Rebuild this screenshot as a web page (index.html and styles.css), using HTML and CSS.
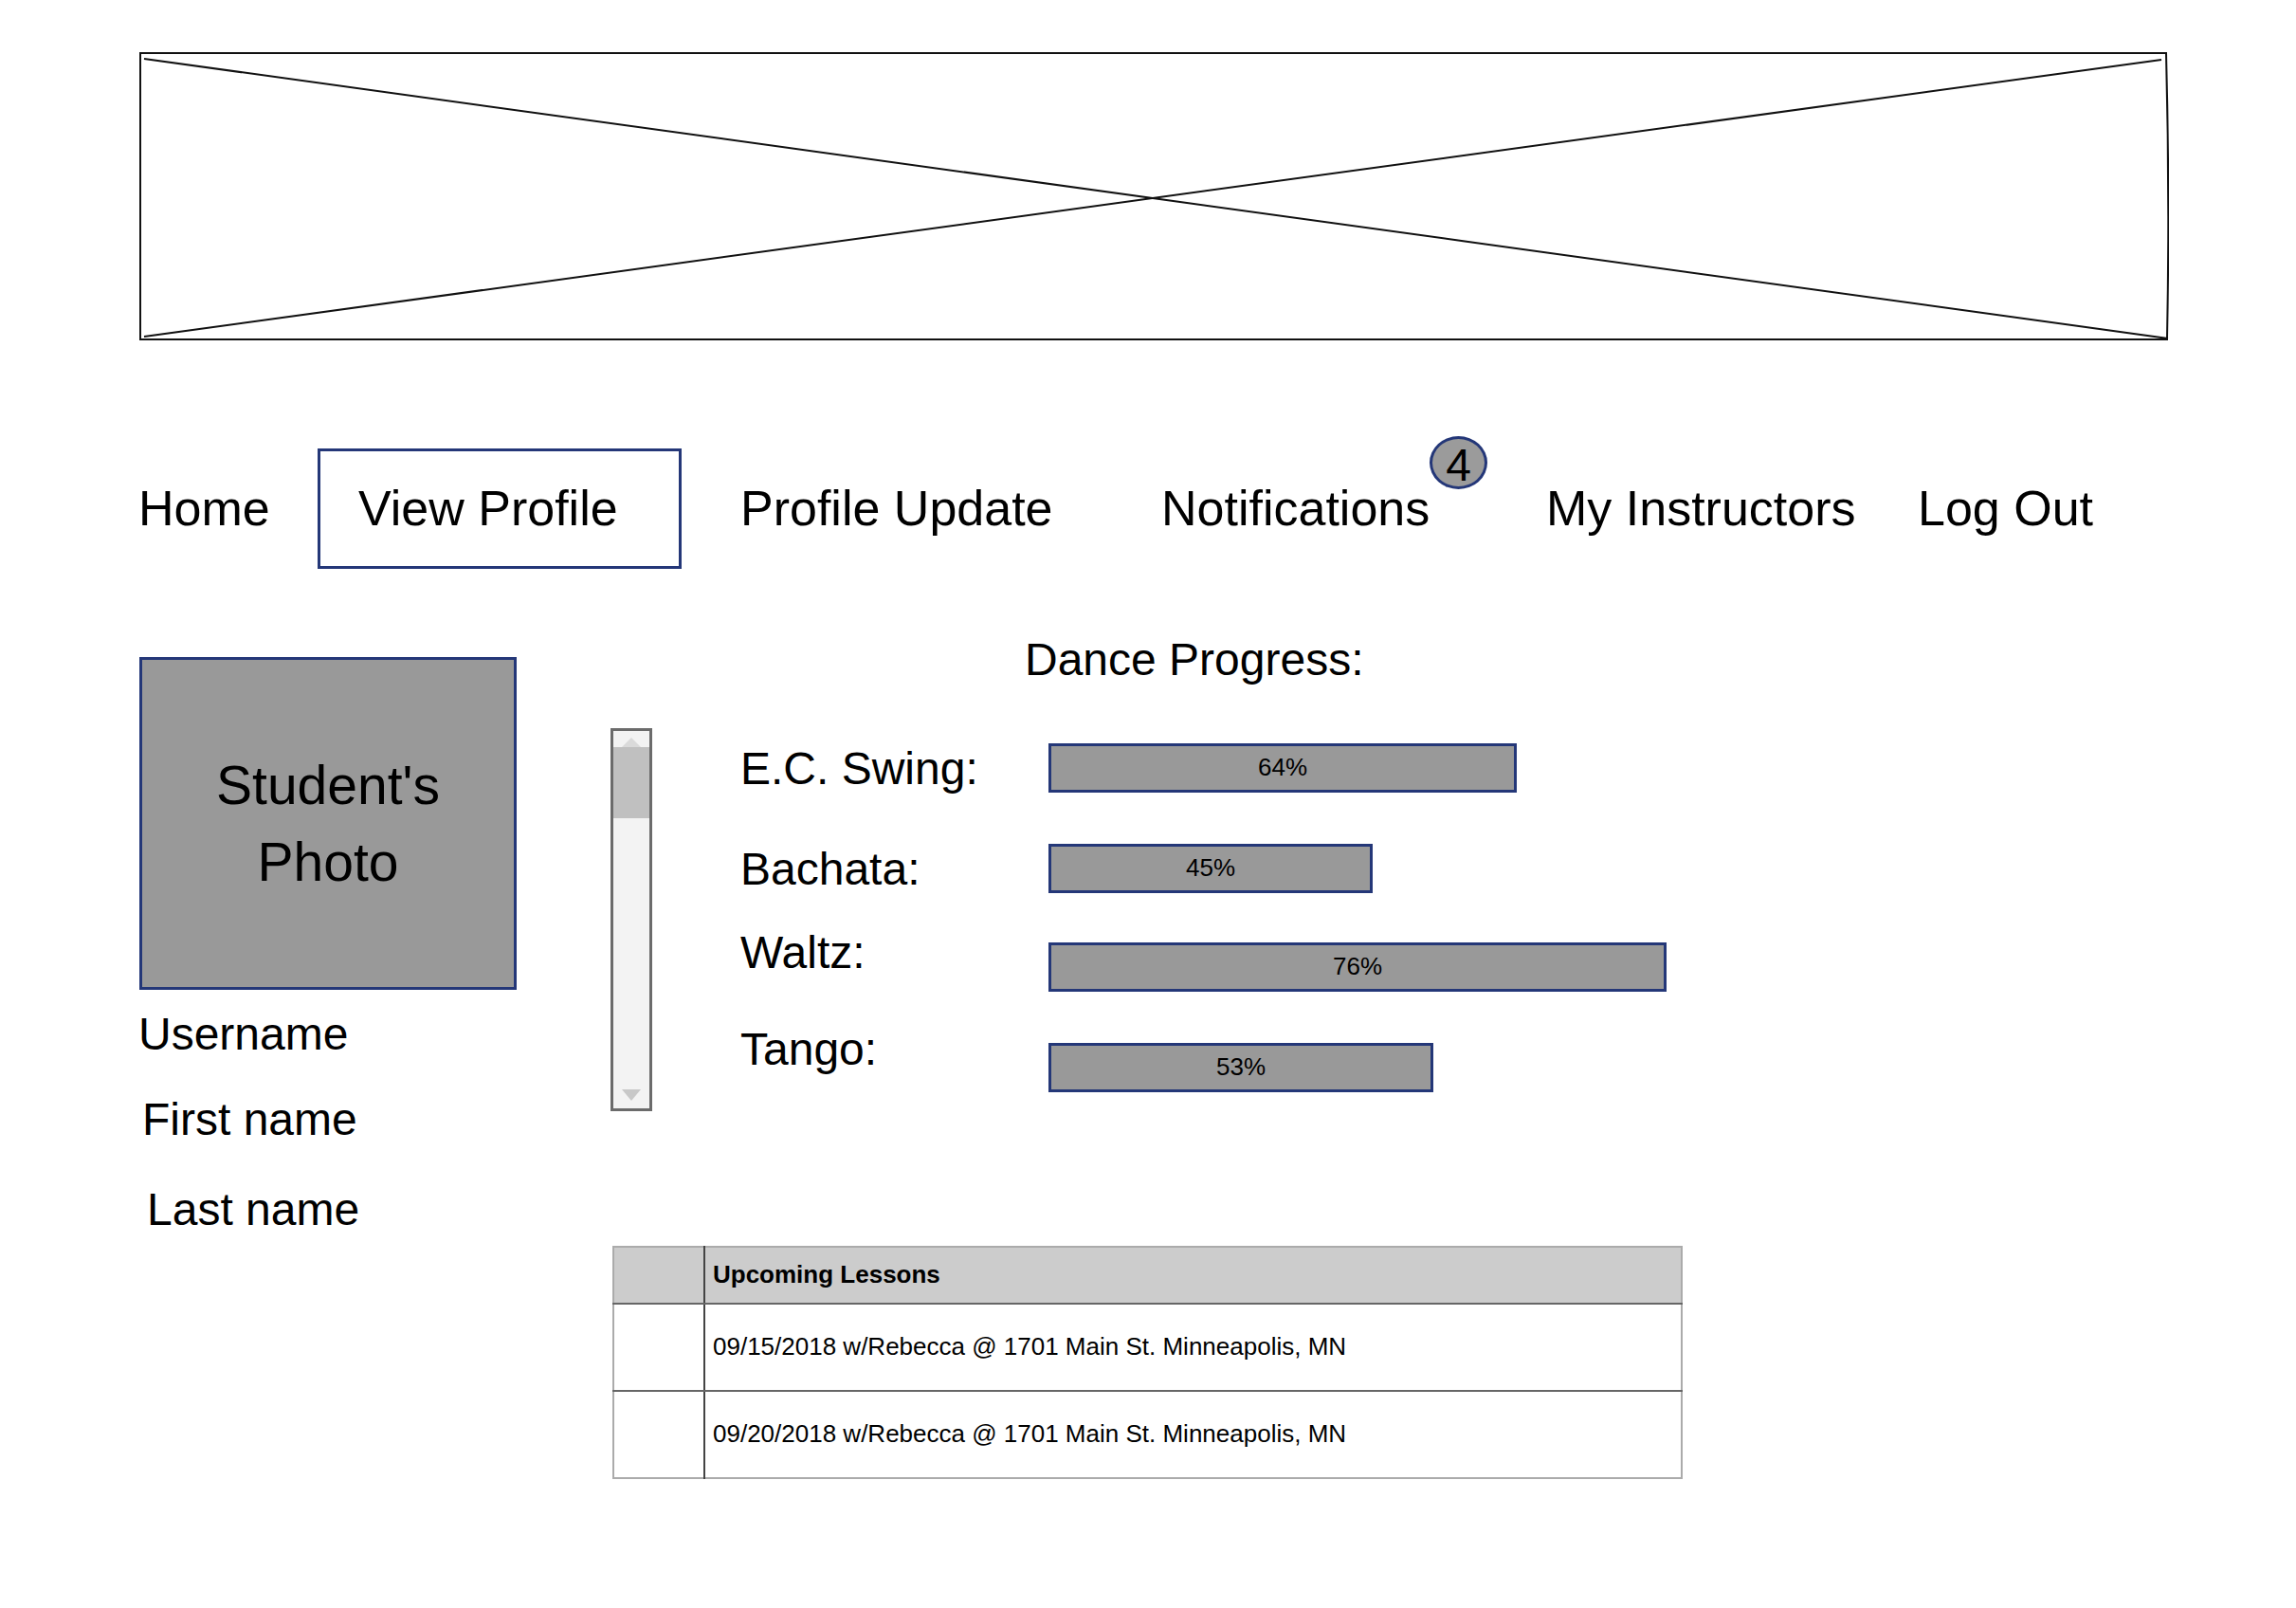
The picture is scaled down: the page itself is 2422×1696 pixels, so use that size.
FILE: index.html
```html
<!DOCTYPE html>
<html lang="en">
<head>
<meta charset="utf-8">
<title>Student Profile</title>
<link rel="stylesheet" href="styles.css">
</head>
<body>
<div class="page">
  <header class="banner">
    <svg width="2141" height="304" viewBox="0 0 2141 304" xmlns="http://www.w3.org/2000/svg">
      <path d="M1 1 H2138 Q2142 152 2139 303 H1 Z" fill="none" stroke="#111" stroke-width="2"/>
      <line x1="5" y1="7" x2="2140" y2="302" stroke="#111" stroke-width="2"/>
      <line x1="2133" y1="8" x2="5" y2="300" stroke="#111" stroke-width="2"/>
    </svg>
  </header>

  <nav class="nav">
    <a class="nav-item" href="#">Home</a>
    <a class="nav-item nav-item--active" href="#">View Profile</a>
    <a class="nav-item" href="#">Profile Update</a>
    <a class="nav-item nav-item--notif" href="#">Notifications<span class="badge">4</span></a>
    <a class="nav-item" href="#">My Instructors</a>
    <a class="nav-item" href="#">Log Out</a>
  </nav>

  <main class="main">
    <aside class="profile">
      <div class="photo">Student's<br>Photo</div>
      <div class="field field--user">Username</div>
      <div class="field field--first">First name</div>
      <div class="field field--last">Last name</div>
    </aside>

    <section class="content">
      <h2 class="progress-title">Dance Progress:</h2>
      <div class="progress">
        <div class="scrollbar">
          <span class="sb-up"></span>
          <span class="sb-thumb"></span>
          <span class="sb-down"></span>
        </div>
        <div class="labels">
          <div class="label">E.C. Swing:</div>
          <div class="label">Bachata:</div>
          <div class="label">Waltz:</div>
          <div class="label">Tango:</div>
        </div>
        <div class="bars">
          <div class="bar" style="width:494px">64%</div>
          <div class="bar" style="width:342px">45%</div>
          <div class="bar" style="width:652px">76%</div>
          <div class="bar" style="width:406px">53%</div>
        </div>
      </div>

      <table class="lessons">
        <thead>
          <tr><th class="c-blank"></th><th>Upcoming Lessons</th></tr>
        </thead>
        <tbody>
          <tr><td class="c-blank"></td><td>09/15/2018 w/Rebecca @ 1701 Main St. Minneapolis, MN</td></tr>
          <tr><td class="c-blank"></td><td>09/20/2018 w/Rebecca @ 1701 Main St. Minneapolis, MN</td></tr>
        </tbody>
      </table>
    </section>
  </main>
</div>
</body>
</html>
```

FILE: styles.css
```css
html, body {
  margin: 0;
  padding: 0;
  background: #fff;
}

body {
  font-family: "Liberation Sans", Arial, Helvetica, sans-serif;
  color: #000;
}

.page {
  padding-left: 142px;
  width: 2280px;
}

/* banner placeholder */
.banner {
  margin-top: 55px;
  margin-left: 5px;
  width: 2141px;
  height: 304px;
}

.banner svg {
  display: block;
}

/* navigation */
.nav {
  display: grid;
  grid-template-columns: 189px 446px 444px 406px 392px auto;
  align-items: center;
  height: 127px;
  margin-top: 114px;
  margin-left: 4px;
  font-size: 52px;
  line-height: 1.15;
}

.nav-item {
  color: #000;
  text-decoration: none;
  white-space: nowrap;
}

.nav-item--active {
  display: flex;
  align-items: center;
  box-sizing: border-box;
  width: 384px;
  height: 127px;
  padding-left: 40px;
  border: 3px solid #243778;
}

.nav-item--notif {
  position: relative;
}

.badge {
  position: absolute;
  left: 283px;
  top: -47px;
  width: 61px;
  height: 56px;
  box-sizing: border-box;
  border: 3px solid #243778;
  border-radius: 50%;
  background: #9b9b9b;
  font-size: 48px;
  line-height: 56px;
  text-align: center;
}

/* main area */
.main {
  display: flex;
  margin-top: 68px;
}

.profile {
  flex: none;
  width: 502px;
  padding-top: 25px;
}

.photo {
  margin-left: 5px;
  width: 398px;
  height: 351px;
  box-sizing: border-box;
  border: 3px solid #243778;
  background: #999;
  display: flex;
  align-items: center;
  justify-content: center;
  text-align: center;
  font-size: 57px;
  line-height: 81px;
}

.field {
  font-size: 48px;
  line-height: 1.15;
}

.field--user {
  margin-top: 19px;
  margin-left: 4px;
}

.field--first {
  margin-top: 35px;
  margin-left: 8px;
}

.field--last {
  margin-top: 40px;
  margin-left: 13px;
}

.content {
  flex: none;
}

.progress-title {
  margin: 0;
  padding-left: 437px;
  font-size: 48px;
  font-weight: normal;
  line-height: 1.15;
}

.progress {
  display: flex;
  margin-top: 45px;
}

/* scrollbar */
.scrollbar {
  flex: none;
  width: 44px;
  height: 404px;
  box-sizing: border-box;
  border: 3px solid #6b6b6b;
  background: #f3f3f3;
  display: flex;
  flex-direction: column;
  align-items: center;
}

.sb-up {
  width: 0;
  height: 0;
  margin-top: 7px;
  border-left: 10px solid transparent;
  border-right: 10px solid transparent;
  border-bottom: 10px solid #dadada;
}

.sb-thumb {
  align-self: stretch;
  height: 75px;
  background: #c0c0c0;
}

.sb-down {
  width: 0;
  height: 0;
  margin-top: auto;
  margin-bottom: 8px;
  border-left: 10px solid transparent;
  border-right: 10px solid transparent;
  border-top: 12px solid #c8c8c8;
}

/* labels and bars */
.labels {
  flex: none;
  width: 325px;
  margin-left: 93px;
  padding-top: 15px;
  font-size: 48px;
  line-height: 1.15;
}

.label:nth-child(2) { margin-top: 51px; }
.label:nth-child(3) { margin-top: 32px; }
.label:nth-child(4) { margin-top: 47px; }

.bars {
  flex: none;
  padding-top: 16px;
}

.bar {
  height: 52px;
  box-sizing: border-box;
  border: 3px solid #243778;
  background: #999;
  display: flex;
  align-items: center;
  justify-content: center;
  font-size: 26px;
  line-height: 1.15;
}

.bar:nth-child(2) { margin-top: 54px; }
.bar:nth-child(3) { margin-top: 52px; }
.bar:nth-child(4) { margin-top: 54px; }

/* lessons table */
.lessons {
  margin-top: 142px;
  margin-left: 2px;
  width: 1129px;
  border-collapse: collapse;
  border: 2px solid #ababab;
  font-size: 26px;
  line-height: 1.15;
}

.lessons th,
.lessons td {
  padding: 0 0 0 8px;
  text-align: left;
  vertical-align: middle;
  white-space: nowrap;
}

.lessons thead tr {
  height: 60px;
  background: #cccccc;
}

.lessons th {
  font-size: 26px;
  font-weight: bold;
  border-bottom: 2px solid #666;
}

.lessons tbody tr {
  height: 92px;
}

.lessons tbody tr:first-child td {
  border-bottom: 2px solid #666;
}

.lessons .c-blank {
  width: 94px;
  padding: 0;
  border-right: 2px solid #444;
}
```
